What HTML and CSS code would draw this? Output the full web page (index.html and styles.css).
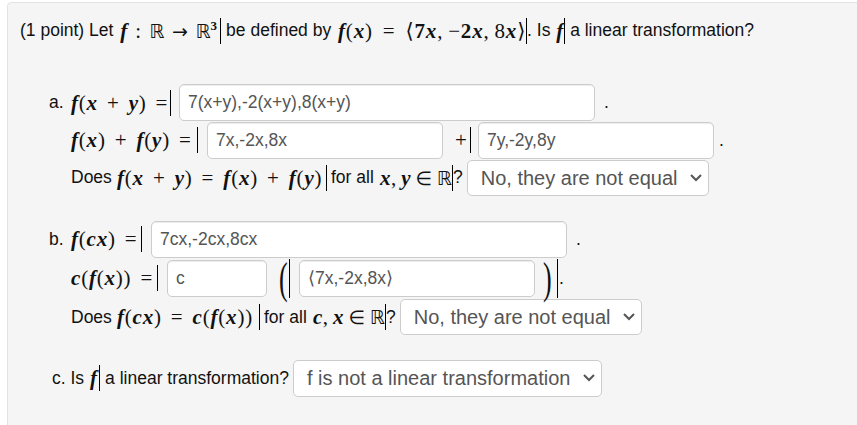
FILE: index.html
```html
<!DOCTYPE html>
<html lang="en">
<head>
  <meta charset="UTF-8">
  <title>Linear Transformation</title>
  <link rel="stylesheet" href="styles.css">
</head>
<body>

  <div class="well">
    <p class="question">(1 point) Let <span class="math m-q1"><i>f</i> : <span class="sym">ℝ</span> <span class="sym">→</span> <span class="sym">ℝ</span><sup>3</sup></span> be defined by <span class="math m-q2"><i>f</i>(<i>x</i>) = ⟨<b>7</b><i>x</i>,&thinsp;−<b>2</b><i>x</i>,&thinsp;8<i>x</i>⟩</span>. Is <span class="math m-f"><i>f</i></span> a linear transformation?</p>

    <div class="part part-a">
      <div class="row">
        <span class="label">a.</span>
        <span class="math m-a1"><i>f</i>(<i>x</i> + <i>y</i>) =</span>
        <input class="answer wide" type="text" value="7(x+y),-2(x+y),8(x+y)">
        <span class="dot">.</span>
      </div>
      <div class="row indent">
        <span class="math m-a2"><i>f</i>(<i>x</i>) + <i>f</i>(<i>y</i>) =</span>
        <input class="answer mid" type="text" value="7x,-2x,8x">
        <span class="math m-plus">+</span>
        <input class="answer mid" type="text" value="7y,-2y,8y">
        <span class="dot dot-plus">.</span>
      </div>
      <div class="row indent">
        <span class="text does">Does</span>
        <span class="math m-a3"><i>f</i>(<i>x</i> + <i>y</i>) = <i>f</i>(<i>x</i>) + <i>f</i>(<i>y</i>)</span>
        <span class="text forall">for all</span>
        <span class="math m-a4"><i>x</i>, <i>y</i> <span class="sym">∈</span> <span class="sym">ℝ</span></span>
        <span class="text ask">?</span>
        <select class="choice sel-equal">
          <option>No, they are not equal</option>
        </select>
      </div>
    </div>

    <div class="part part-b">
      <div class="row">
        <span class="label">b.</span>
        <span class="math m-b1"><i>f</i>(<i>cx</i>) =</span>
        <input class="answer wide" type="text" value="7cx,-2cx,8cx">
        <span class="dot">.</span>
      </div>
      <div class="row indent">
        <span class="math m-b2"><i>c</i>(<i>f</i>(<i>x</i>)) =</span>
        <input class="answer short" type="text" value="c">
        <span class="math paren m-open"><span class="glyph">(</span></span>
        <input class="answer mid" type="text" value="⟨7x,-2x,8x⟩">
        <span class="math paren m-close"><span class="glyph">)</span></span>
        <span class="dot dot-close">.</span>
      </div>
      <div class="row indent">
        <span class="text does">Does</span>
        <span class="math m-b3"><i>f</i>(<i>cx</i>) = <i>c</i>(<i>f</i>(<i>x</i>))</span>
        <span class="text forall">for all</span>
        <span class="math m-b4"><i>c</i>, <i>x</i> <span class="sym">∈</span> <span class="sym">ℝ</span></span>
        <span class="text ask">?</span>
        <select class="choice sel-equal">
          <option>No, they are not equal</option>
        </select>
      </div>
    </div>

    <div class="part part-c">
      <div class="row">
        <span class="label label-c">c. Is</span>
        <span class="math m-c"><i>f</i></span>
        <span class="text">a linear transformation?</span>
        <select class="choice sel-linear">
          <option>f is not a linear transformation</option>
        </select>
      </div>
    </div>
  </div>

</body>
</html>
```

FILE: styles.css
```css
body {
  margin: 0;
  overflow: hidden;
  background-color: white;
  color: #111;
  font-family: 'Liberation Sans', Arial, sans-serif;
  font-size: 17.5px;
}

.well {
  margin: 2px -20px 0 7px;
  height: 440px;
  padding: 0 0 0 12px;
  background-color: #f5f5f5;
  border: 1px solid #e3e3e3;
  border-radius: 4px;
  box-sizing: border-box;
}

.question {
  margin: 0;
  padding-top: 9px;
  height: 36px;
  line-height: 36px;
  white-space: nowrap;
}

.part {
  padding-left: 29px;
}

.part-a {
  margin-top: 36px;
}

.part-a .row {
  height: 37.5px;
}

.part-b {
  margin-top: 23px;
}

.part-b .row {
  height: 39px;
}

.part-c {
  margin-top: 23px;
}

.row {
  display: flex;
  align-items: center;
  white-space: nowrap;
}

.indent {
  padding-left: 22px;
}

.label {
  width: 22px;
}

.label-c {
  width: auto;
  margin-left: 3px;
  margin-right: 6px;
}

.text {
  margin-right: 4px;
}

.does {
  width: 40px;
  margin-right: 6px;
}

.forall {
  width: 44px;
  margin-left: 4px;
  margin-right: 5px;
}

/* math text, bar on the right is the leftover selection caret from the page */
.math {
  display: inline-block;
  box-sizing: border-box;
  height: 26px;
  font-family: 'Liberation Serif', 'DejaVu Serif', serif;
  font-size: 21px;
  line-height: 26px;
  letter-spacing: 0.8px;
  word-spacing: 3px;
  border-right: 1px solid black;
}

.math i {
  font-weight: bold;
}

.sym {
  font-family: 'DejaVu Sans', sans-serif;
  font-size: 19px;
  font-weight: normal;
  letter-spacing: 0;
}

.question .math {
  vertical-align: middle;
}

.math sup {
  font-size: 13px;
  font-weight: bold;
  line-height: 0;
}

.m-q1 {
  width: 101px;
  margin-left: 2px;
  letter-spacing: 0.4px;
  word-spacing: 2px;
}

.m-q2 {
  width: 189px;
  margin-left: 2px;
  word-spacing: 4px;
}

.m-f {
  width: 9px;
  margin-left: 1px;
}

.m-c {
  width: 10px;
  margin-right: 5px;
}

.m-a1 {
  width: 100px;
  margin-right: 8px;
}

.m-a2 {
  width: 127px;
  margin-right: 9px;
}

.m-a3 {
  width: 210px;
}

.m-a4, .m-b4 {
  width: 73px;
  letter-spacing: 0.4px;
  word-spacing: -1px;
}

.m-b1 {
  width: 71px;
  margin-right: 9px;
}

.m-b2 {
  width: 87px;
  margin-right: 9px;
}

.m-b3 {
  width: 143px;
}

.m-plus {
  width: 16px;
  margin: 0 7px 0 12px;
}

.paren {
  height: 39px;
  line-height: 39px;
  font-weight: normal;
}

.glyph {
  display: inline-block;
  font-size: 26px;
  transform: scaleY(1.7);
}

.m-open {
  width: 9px;
  margin: 0 9px 0 14px;
}

.m-open .glyph {
  margin-left: -2px;
}

.m-close {
  width: 12px;
  margin-left: 11px;
}

.m-close .glyph {
  margin-left: -3px;
}

.answer {
  height: 37px;
  padding: 0 8px;
  box-sizing: border-box;
  background-color: white;
  border: 1px solid #ccc;
  border-radius: 5px;
  box-shadow: inset 0 1px 1px rgba(0, 0, 0, 0.075);
  color: #555;
  font-family: 'Liberation Sans', Arial, sans-serif;
  font-size: 17.5px;
}

.wide {
  width: 416px;
}

.mid {
  width: 236px;
}

.short {
  width: 100px;
}

.dot {
  margin-left: 9px;
}

.dot-plus {
  margin-left: 5px;
}

.dot-close {
  margin-left: 1px;
}

.choice {
  height: 37px;
  padding: 0 30px 0 13px;
  appearance: none;
  background-color: white;
  background-image: url("data:image/svg+xml,%3Csvg xmlns='http://www.w3.org/2000/svg' width='14' height='10'%3E%3Cpath d='M2 2l5 5 5-5' fill='none' stroke='%23555' stroke-width='2'/%3E%3C/svg%3E");
  background-repeat: no-repeat;
  background-position: right 5px center;
  border: 1px solid #ccc;
  border-radius: 5px;
  color: #555;
  font-family: 'Liberation Sans', Arial, sans-serif;
  font-size: 20px;
}

.sel-equal {
  width: 242px;
  height: 36px;
}

.sel-linear {
  width: 309px;
}
```
